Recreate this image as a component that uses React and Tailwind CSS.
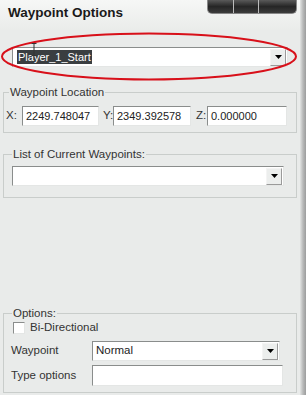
const font = { fontFamily: '"Liberation Sans", Arial, sans-serif' };

function Arrow() {
  return (
    <div className="w-[16px] h-[17px] mr-[1px] flex items-center justify-center bg-[#eceeed] border border-t-[#f4f4f4] border-l-[#f4f4f4] border-b-[#9a9a9a] border-r-[#9a9a9a]">
      <svg width="7" height="4" viewBox="0 0 7 4">
        <path d="M0 0h7L3.5 4z" fill="#000" />
      </svg>
    </div>
  );
}

function Field({ className, children }) {
  return (
    <div className={"h-[20px] bg-white border border-t-[#8a8d8c] border-l-[#8a8d8c] border-b-[#e4e6e5] border-r-[#e4e6e5] flex items-center text-[11.5px] text-[#222] " + className}>
      {children}
    </div>
  );
}

function Group({ label, className, children }) {
  return (
    <fieldset className={"mx-[3px] border border-[#c9cdcb] " + className}>
      <legend className="ml-[3px] px-[1px] text-[11.5px] text-[#333] leading-[12px]">{label}</legend>
      {children}
    </fieldset>
  );
}

export default function App() {
  return (
    <div style={font} className="w-[306px] h-[395px] bg-[#e9ebea] flex overflow-hidden">
      <div className="w-[300px] flex flex-col relative">
        <div className="h-[30px] bg-gradient-to-b from-[#f6f7f6] to-[#eaecea] flex items-start">
          <div className="pl-[8px] pt-[5px] text-[13.5px] font-bold text-[#1a1a1a] leading-[16px]">Waypoint Options</div>
          <div className="ml-auto mr-[3px] w-[90px] h-[14px] rounded-b-[5px] bg-gradient-to-b from-[#5a5a5a] via-[#262626] to-[#3c3c3c] border border-t-0 border-[#888] flex">
            <div className="w-[26px] border-r border-[#bbb]" />
            <div className="w-[25px] border-r border-[#bbb]" />
            <div className="flex-1" />
          </div>
        </div>

        <div className="h-[17px]" />
        <Field className="mx-[12px] w-[276px] justify-between">
          <span className="ml-[4px] bg-[#3a3e41] text-white px-[1px] leading-[14px] text-[11px]">Player_1_Start</span>
          <Arrow />
        </Field>
        <svg className="absolute left-0 top-[32px]" width="300" height="50" viewBox="0 0 300 50">
          <ellipse cx="149" cy="24.5" rx="147" ry="23" fill="none" stroke="#d8101a" strokeWidth="2" />
        </svg>
        <svg className="absolute left-[31px] top-[43px]" width="6" height="13" viewBox="0 0 6 13">
          <path d="M0.5 0.5h5M3 0.5v12M0.5 12.5h5" stroke="#333" strokeWidth="1" fill="none" />
        </svg>

        <Group label="Waypoint Location" className="mt-[19px] px-[2px] pb-[6px]">
          <div className="flex items-center text-[11.5px] text-[#333] mt-[8px]">
            <span className="w-[16px]">X:</span>
            <Field className="w-[77px] pl-[3px] text-[11px]">2249.748047</Field>
            <span className="w-[14px] pl-[4px]">Y:</span>
            <Field className="w-[78px] pl-[3px] text-[11px]">2349.392578</Field>
            <span className="w-[16px] pl-[5px]">Z:</span>
            <Field className="w-[80px] pl-[3px] text-[11px]">0.000000</Field>
          </div>
        </Group>

        <Group label="List of Current Waypoints:" className="mt-[15px] px-[5px] pb-[11px]">
          <Field className="mt-[6px] ml-[3px] w-[272px] justify-end">
            <Arrow />
          </Field>
        </Group>

        <div className="flex-1" />

        <Group label="Options:" className="px-[5px] pb-[6px] mb-[2px]">
          <div className="flex items-center h-[14px] mt-[2px] ml-[4px] text-[11.5px] text-[#333]">
            <div className="w-[12px] h-[12px] bg-white border border-t-[#8a8d8c] border-l-[#8a8d8c] border-b-[#e4e6e5] border-r-[#e4e6e5]" />
            <span className="ml-[5px]">Bi-Directional</span>
          </div>
          <div className="flex items-center mt-[6px] text-[11.5px] text-[#333]">
            <span className="w-[83px] pl-[2px]">Waypoint</span>
            <Field className="w-[188px] justify-between">
              <span className="ml-[3px]">Normal</span>
              <Arrow />
            </Field>
          </div>
          <div className="flex items-center mt-[4px] text-[11.5px] text-[#333]">
            <span className="w-[83px] pl-[2px]">Type options</span>
            <Field className="w-[191px] h-[21px]" />
          </div>
        </Group>
      </div>
      <div className="w-[6px] bg-gradient-to-r from-[#e2e4e3] via-[#b8b9b9] to-[#9c9d9d]" />
    </div>
  );
}
